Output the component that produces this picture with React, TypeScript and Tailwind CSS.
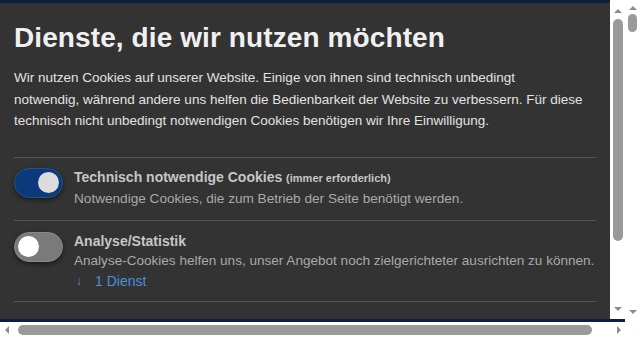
import React from 'react';

const font = { fontFamily: '"Liberation Sans", Arial, sans-serif' };

const Toggle = ({ on }: { on: boolean }) => (
  <div
    className={
      on
        ? 'mt-[1px] w-[49px] h-[30px] rounded-full bg-[#0b3a7c] border border-[#2a4f86] flex items-center justify-end pr-[3px] shadow-[0_2px_4px_rgba(0,0,0,0.5)] shrink-0'
        : 'mt-[1px] w-[49px] h-[30px] rounded-full bg-[#7a7a7a] border border-[#8a8a8a] flex items-center justify-start pl-[3px] shadow-[0_2px_4px_rgba(0,0,0,0.5)] shrink-0'
    }
  >
    <div className={on ? 'w-[21px] h-[21px] rounded-full bg-[#dcdcdc]' : 'w-[21px] h-[21px] rounded-full bg-white'} />
  </div>
);

const Arrow = ({ dir }: { dir: 'up' | 'down' | 'left' | 'right' }) => {
  const cls = {
    up: 'border-x-[4px] border-x-transparent border-b-[4px] border-b-[#8c8c8c]',
    down: 'border-x-[4px] border-x-transparent border-t-[4px] border-t-[#8c8c8c]',
    left: 'border-y-[4px] border-y-transparent border-r-[4px] border-r-[#8c8c8c]',
    right: 'border-y-[4px] border-y-transparent border-l-[4px] border-l-[#8c8c8c]',
  }[dir];
  return <div className={`w-0 h-0 ${cls}`} />;
};

export default function App() {
  return (
    <div className="w-[640px] h-[337px] bg-white flex flex-col overflow-hidden" style={font}>
      <div className="flex h-[322px]">
        <div className="w-[625px] flex flex-col">
          <div className="flex flex-1 min-h-0">
            <div className="w-[610px] flex flex-col">
              <div className="h-[3px] bg-[#0c1f3f]" />
              <div className="flex-1 bg-[#333333] pl-[14px] pr-[14px] pt-[19px]">
                <h1 className="text-[28px] leading-[32px] font-bold text-[#f0f0f0] tracking-[0.1px]">
                  Dienste, die wir nutzen möchten
                </h1>
                <p className="mt-[13px] text-[13.5px] leading-[21.5px] text-[#e2e2e2] whitespace-nowrap">
                  Wir nutzen Cookies auf unserer Website. Einige von ihnen sind technisch unbedingt
                  <br />
                  notwendig, während andere uns helfen die Bedienbarkeit der Website zu verbessern. Für diese
                  <br />
                  technisch nicht unbedingt notwendigen Cookies benötigen wir Ihre Einwilligung.
                </p>
                <div className="mt-[25px] border-t border-[#555555]" />
                <div className="flex gap-[11px] pt-[9px] pb-[10px]">
                  <Toggle on />
                  <div className="flex flex-col">
                    <div className="text-[14px] leading-[20px] font-bold text-[#c6c6c6]">
                      Technisch notwendige Cookies{' '}
                      <span className="text-[11px] font-bold">(immer erforderlich)</span>
                    </div>
                    <div className="text-[13.6px] leading-[22px] text-[#a9a9a9] whitespace-nowrap">
                      Notwendige Cookies, die zum Betrieb der Seite benötigt werden.
                    </div>
                  </div>
                </div>
                <div className="border-t border-[#555555]" />
                <div className="flex gap-[11px] pt-[10px] pb-[10px]">
                  <Toggle on={false} />
                  <div className="flex flex-col">
                    <div className="text-[14px] leading-[20px] font-bold text-[#c6c6c6]">Analyse/Statistik</div>
                    <div className="text-[13.55px] leading-[20px] text-[#a9a9a9] whitespace-nowrap">
                      Analyse-Cookies helfen uns, unser Angebot noch zielgerichteter ausrichten zu können.
                    </div>
                    <div className="flex items-center text-[14px] leading-[20px] text-[#4a8fd8]">
                      <span className="w-[21px] pl-[2px] text-[12px]">↓</span>
                      <span>1 Dienst</span>
                    </div>
                  </div>
                </div>
                <div className="border-t border-[#555555]" />
              </div>
            </div>
            <div className="w-[15px] bg-white flex flex-col items-center pt-[9px] pb-[8px]">
              <Arrow dir="up" />
              <div className="mt-[6px] w-[10px] h-[222px] rounded-full bg-[#9a9a9a]" />
              <div className="flex-1" />
              <Arrow dir="down" />
            </div>
          </div>
          <div className="h-[3px] bg-[#0c1f3f]" />
        </div>
        <div className="w-[15px] bg-white flex flex-col items-center pt-[6px] pb-[8px]">
          <Arrow dir="up" />
          <div className="mt-[4px] w-[9px] h-[18px] rounded-full bg-[#9a9a9a]" />
          <div className="flex-1" />
          <Arrow dir="down" />
        </div>
      </div>
      <div className="h-[15px] bg-white flex items-center px-[5px]">
        <Arrow dir="left" />
        <div className="ml-[9px] w-[574px] h-[10px] rounded-full bg-[#9a9a9a]" />
        <div className="flex-1" />
        <div className="mr-[14px]">
          <Arrow dir="right" />
        </div>
      </div>
    </div>
  );
}
